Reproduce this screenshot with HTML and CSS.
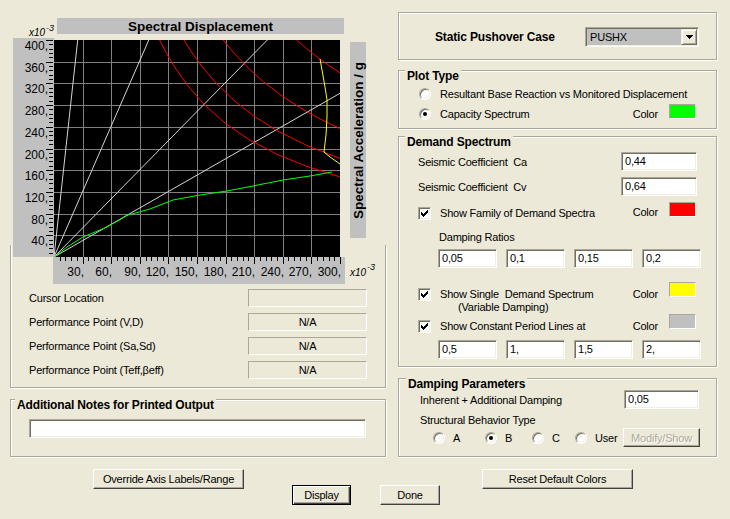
FILE: index.html
```html
<!DOCTYPE html>
<html>
<head>
<meta charset="utf-8">
<title>Pushover Curve</title>
<link rel="stylesheet" href="styles.css">
</head>
<body>
<div class="dialog">
  <div class="panels">
    <div class="left">
      <svg class="chart" width="392" height="286" viewBox="0 0 392 286">
        <defs><clipPath id="plotclip"><rect x="54" y="40" width="286" height="217"/></clipPath></defs>
        <text class="exp" x="29" y="36">x10</text><text class="exp-sup" x="46" y="31">-3</text>
        <rect class="panel" x="57" y="18" width="287" height="16"/>
        <text class="ttl" x="200.5" y="31" text-anchor="middle">Spectral Displacement</text>
        <rect class="panel" x="13" y="38" width="41" height="219"/>
        <rect class="panel" x="53" y="257" width="292" height="27"/>
        <rect class="panel" x="350" y="42" width="16" height="196"/>
        <text class="ttl" transform="translate(362.5 140.5) rotate(-90)" text-anchor="middle">Spectral Acceleration / g</text>
        <rect x="54" y="40" width="286" height="217" fill="#000"/>
        <path class="grid" d="M54 62.5H340M54 83.5H340M54 105.5H340M54 127.5H340M54 149.5H340M54 170.5H340M54 192.5H340M54 214.5H340M54 235.5H340M83.5 40V257M111.5 40V257M140.5 40V257M168.5 40V257M197.5 40V257M226.5 40V257M254.5 40V257M283.5 40V257M311.5 40V257"/>
        <g clip-path="url(#plotclip)" fill="none">
          <path stroke="#d4d4d4" d="M54 257L77.7 40M54 257L148.8 40M54 257L267.3 40M54 257L340 93.3"/>
          <polyline stroke="#ff0000" points="296.6,40 306.6,48.6 316.2,56.2 327.6,64.6 340,72.9"/>
          <polyline stroke="#ff0000" points="223.2,40 235.1,54.3 249.4,69.1 263.7,81.9 282.8,96.5 301.9,108.8 320.9,119.4 340,128.6"/>
          <polyline stroke="#ff0000" points="183.9,40 192.2,53.1 201.8,66.2 216.1,83.1 235.1,101.4 254.2,116.2 278,131.2 306.6,145.4 340,158.4"/>
          <polyline stroke="#ff0000" points="159.6,40 166.5,53.3 175.1,67.8 187.5,85.3 204.6,104.9 225.6,123.5 249.4,139.8 278,154.7 306.6,166.3 340,176.9"/>
          <polyline stroke="#ffff00" points="320,59 322,70 325,87 327,100 327,117 326,135 324,152 330,157 340,164"/>
          <polyline stroke="#00ff00" points="54,257 67,247 83,237 107,227 128,215 150,209 173,200 200,195 227,191 253,186 283,180 310,176 332,172"/>
        </g>
        <path class="tick" d="M46 40.5h7M46 62.5h7M46 83.5h7M46 105.5h7M46 127.5h7M46 149.5h7M46 170.5h7M46 192.5h7M46 214.5h7M46 235.5h7M49 44.5h4M49 49.5h4M49 53.5h4M49 57.5h4M49 66.5h4M49 70.5h4M49 75.5h4M49 79.5h4M49 88.5h4M49 92.5h4M49 96.5h4M49 101.5h4M49 109.5h4M49 114.5h4M49 118.5h4M49 122.5h4M49 131.5h4M49 135.5h4M49 140.5h4M49 144.5h4M49 153.5h4M49 157.5h4M49 161.5h4M49 166.5h4M49 174.5h4M49 179.5h4M49 183.5h4M49 188.5h4M49 196.5h4M49 201.5h4M49 205.5h4M49 209.5h4M49 218.5h4M49 222.5h4M49 227.5h4M49 231.5h4M49 240.5h4M49 244.5h4M49 248.5h4M49 253.5h4"/>
        <path class="tick" d="M83.5 257v7M111.5 257v7M140.5 257v7M168.5 257v7M197.5 257v7M226.5 257v7M254.5 257v7M283.5 257v7M311.5 257v7M340.5 257v7M60.5 257v4M65.5 257v4M71.5 257v4M77.5 257v4M88.5 257v4M94.5 257v4M100.5 257v4M105.5 257v4M117.5 257v4M123.5 257v4M128.5 257v4M134.5 257v4M146.5 257v4M151.5 257v4M157.5 257v4M163.5 257v4M174.5 257v4M180.5 257v4M186.5 257v4M191.5 257v4M203.5 257v4M208.5 257v4M214.5 257v4M220.5 257v4M231.5 257v4M237.5 257v4M243.5 257v4M248.5 257v4M260.5 257v4M266.5 257v4M271.5 257v4M277.5 257v4M288.5 257v4M294.5 257v4M300.5 257v4M306.5 257v4M317.5 257v4M323.5 257v4M329.5 257v4M334.5 257v4"/>
        <g class="ax" text-anchor="end">
          <text x="48" y="50">400,</text><text x="48" y="72">360,</text><text x="48" y="93">320,</text><text x="48" y="115">280,</text><text x="48" y="137">240,</text><text x="48" y="159">200,</text><text x="48" y="180">160,</text><text x="48" y="202">120,</text><text x="48" y="224">80,</text><text x="48" y="245">40,</text>
          <text x="84" y="276">30,</text><text x="112" y="276">60,</text><text x="141" y="276">90,</text><text x="169" y="276">120,</text><text x="198" y="276">150,</text><text x="227" y="276">180,</text><text x="255" y="276">210,</text><text x="284" y="276">240,</text><text x="312" y="276">270,</text><text x="341" y="276">300,</text>
        </g>
        <text class="exp" x="350" y="276">x10</text><text class="exp-sup" x="367" y="270">-3</text>
      </svg>

      <div class="group results">
        <div class="info-row"><span>Cursor Location</span><span class="static"></span></div>
        <div class="info-row"><span>Performance Point (V,D)</span><span class="static">N/A</span></div>
        <div class="info-row"><span>Performance Point (Sa,Sd)</span><span class="static">N/A</span></div>
        <div class="info-row"><span>Performance Point (Teff,βeff)</span><span class="static">N/A</span></div>
      </div>

      <div class="group notes">
        <div class="legend">Additional Notes for Printed Output</div>
        <div class="edit notes-edit"></div>
      </div>
    </div>

    <div class="right">
      <div class="group case">
        <span class="bold">Static Pushover Case</span>
        <div class="combo">
          <span class="combo-text">PUSHX</span>
          <span class="combo-btn"><svg width="7" height="4" viewBox="0 0 7 4"><path d="M0 0H7V1H6V2H5V3H4V4H3V3H2V2H1V1H0Z" fill="#000"/></svg></span>
        </div>
      </div>

      <div class="group plot-type">
        <div class="legend">Plot Type</div>
        <div class="opt-row first"><span class="radio"></span><span class="opt-label">Resultant Base Reaction vs Monitored Displacement</span></div>
        <div class="opt-row"><span class="radio checked"></span><span class="opt-label">Capacity Spectrum</span><span class="color-label">Color</span><span class="swatch green"></span></div>
      </div>

      <div class="group demand">
        <div class="legend">Demand Spectrum</div>
        <div class="field-row ca"><span>Seismic Coefficient&nbsp; Ca</span><span class="edit coef">0,44</span></div>
        <div class="field-row cv"><span>Seismic Coefficient&nbsp; Cv</span><span class="edit coef">0,64</span></div>
        <div class="check-row family">
          <span class="checkbox"><svg width="7" height="7" viewBox="0 0 7 7"><path d="M6 0H7V3H6V4H5V5H4V6H3V7H2V6H1V5H0V2H1V3H2V4H3V3H4V2H5V1H6Z" fill="#000"/></svg></span>
          <span class="opt-label">Show Family of Demand Spectra</span>
          <span class="color-label">Color</span><span class="swatch red"></span>
        </div>
        <div class="sub-label">Damping Ratios</div>
        <div class="quad first-quad"><span class="edit">0,05</span><span class="edit">0,1</span><span class="edit">0,15</span><span class="edit">0,2</span></div>
        <div class="check-row single">
          <span class="checkbox"><svg width="7" height="7" viewBox="0 0 7 7"><path d="M6 0H7V3H6V4H5V5H4V6H3V7H2V6H1V5H0V2H1V3H2V4H3V3H4V2H5V1H6Z" fill="#000"/></svg></span>
          <span class="opt-label two-line"><span class="l1">Show Single&nbsp; Demand Spectrum</span><span class="l2">(Variable Damping)</span></span>
          <span class="color-label">Color</span><span class="swatch yellow"></span>
        </div>
        <div class="check-row constant">
          <span class="checkbox"><svg width="7" height="7" viewBox="0 0 7 7"><path d="M6 0H7V3H6V4H5V5H4V6H3V7H2V6H1V5H0V2H1V3H2V4H3V3H4V2H5V1H6Z" fill="#000"/></svg></span>
          <span class="opt-label">Show Constant Period Lines at</span>
          <span class="color-label">Color</span><span class="swatch grey"></span>
        </div>
        <div class="quad second-quad"><span class="edit">0,5</span><span class="edit">1,</span><span class="edit">1,5</span><span class="edit">2,</span></div>
      </div>

      <div class="group damping">
        <div class="legend">Damping Parameters</div>
        <div class="field-row inherent"><span>Inherent + Additional Damping</span><span class="edit coef2">0,05</span></div>
        <div class="sub-label struct">Structural Behavior Type</div>
        <div class="behavior">
          <span class="beh a"><span class="radio"></span><span class="opt-label">A</span></span>
          <span class="beh b"><span class="radio checked"></span><span class="opt-label">B</span></span>
          <span class="beh c"><span class="radio"></span><span class="opt-label">C</span></span>
          <span class="beh u"><span class="radio"></span><span class="opt-label">User</span></span>
          <span class="button disabled modify">Modify/Show</span>
        </div>
      </div>
    </div>
  </div>

  <div class="footer">
    <div class="btn-row top-row">
      <span class="button wide">Override Axis Labels/Range</span>
      <span class="button wide reset">Reset Default Colors</span>
    </div>
    <div class="btn-row bottom-row">
      <span class="button default display">Display</span>
      <span class="button done">Done</span>
    </div>
  </div>
</div>
</body>
</html>
```

FILE: styles.css
```css
* { box-sizing: border-box; }
html, body { margin: 0; padding: 0; }
body {
  width: 730px;
  height: 519px;
  overflow: hidden;
  background: #ECE9D8;
  font-family: "Liberation Sans", Arial, sans-serif;
  font-size: 11px;
  letter-spacing: -0.2px;
  color: #000;
}
.dialog { display: flex; flex-direction: column; width: 730px; height: 519px; }
.panels { display: flex; }
.left { width: 392px; display: flex; flex-direction: column; }
.right { width: 338px; display: flex; flex-direction: column; padding: 12px 0 0 6px; }

/* chart */
.chart { display: block; position: relative; z-index: 1; margin-bottom: -41px; letter-spacing: 0; }
.chart .panel { fill: #C0C0C0; }
.chart .ttl { font: bold 13.5px "Liberation Sans", Arial, sans-serif; fill: #000; }
.chart .ax { font: 12px "Liberation Sans", Arial, sans-serif; fill: #000; }
.chart .exp { font: italic 10px "Liberation Sans", Arial, sans-serif; fill: #000; }
.chart .exp-sup { font: italic 9px "Liberation Sans", Arial, sans-serif; fill: #000; }
.chart .grid { stroke: #808080; stroke-width: 1; fill: none; }
.chart .tick { stroke: #000; stroke-width: 1; fill: none; }

/* group boxes */
.group {
  border: 1px solid #ACA899;
  box-shadow: inset 1px 1px 0 #fff, 1px 1px 0 #fff;
  display: flex;
  flex-direction: column;
}
.legend {
  align-self: flex-start;
  margin: -1px 0 0 6px;
  padding: 0 2px;
  height: 12px;
  line-height: 12px;
  font-weight: bold;
  font-size: 12px;
  letter-spacing: -0.15px;
  background: #ECE9D8;
  position: relative;
  white-space: nowrap;
}
.bold { font-weight: bold; font-size: 12px; letter-spacing: -0.15px; }

.results {
  margin-left: 10px;
  width: 376px;
  height: 143px;
  border-top: 0;
  box-shadow: inset 1px 0 0 #fff, 1px 1px 0 #fff;
  padding: 44px 18px 0 18px;
  gap: 6px;
}
.info-row { display: flex; align-items: center; justify-content: space-between; height: 18px; }
.static {
  width: 119px;
  height: 18px;
  border: 1px solid;
  border-color: #ACA899 #fff #fff #ACA899;
  text-align: center;
  line-height: 16px;
}
.notes { margin: 11px 0 0 10px; width: 376px; height: 58px; }
.notes .legend { margin-left: 4px; }
.notes-edit { margin: 8px 0 0 18px; width: 337px; height: 18px; }

.edit {
  display: block;
  background: #fff;
  border: 1px solid;
  border-color: #ACA899 #fff #fff #ACA899;
  box-shadow: inset 1px 1px 0 #716F64, inset -1px -1px 0 #F1EFE2;
  padding-left: 3px;
  line-height: 17px;
  height: 19px;
  white-space: nowrap;
}

/* static pushover case */
.case {
  width: 319px;
  height: 48px;
  flex-direction: row;
  align-items: center;
  justify-content: space-between;
  padding: 1px 17px 0 36px;
}
.combo {
  width: 114px;
  height: 20px;
  display: flex;
  border: 1px solid;
  border-color: #ACA899 #fff #fff #ACA899;
  box-shadow: inset 1px 1px 0 #716F64, inset -1px -1px 0 #F1EFE2;
  background: #C0C0C0;
  padding: 1px;
}
.combo-text { flex: 1; padding-left: 3px; line-height: 16px; }
.combo-btn {
  width: 16px;
  height: 16px;
  background: #ECE9D8;
  border: 1px solid;
  border-color: #F1EFE2 #716F64 #716F64 #F1EFE2;
  box-shadow: inset 1px 1px 0 #fff, inset -1px -1px 0 #ACA899;
  display: flex;
  align-items: center;
  justify-content: center;
}
.combo-btn svg { display: block; }

/* plot type */
.plot-type { width: 319px; height: 59px; margin-top: 10px; }
.opt-row { display: flex; align-items: center; height: 20px; padding: 0 20px 0 20px; }
.opt-row.first { margin-top: 2px; }
.opt-row .swatch { align-self: flex-start; }
.radio {
  flex: none;
  width: 12px;
  height: 12px;
  border-radius: 50%;
  background: #fff;
  border: 1px solid;
  border-color: #ACA899 #fff #fff #ACA899;
  box-shadow: inset 1px 1px 0 #716F64, inset -1px -1px 0 #F1EFE2;
  display: flex;
  align-items: center;
  justify-content: center;
}
.radio.checked::after {
  content: "";
  width: 4px;
  height: 4px;
  border-radius: 50%;
  background: #000;
}
.opt-label { margin-left: 9px; white-space: nowrap; }
.color-label { margin-left: auto; }
.swatch {
  flex: none;
  width: 27px;
  height: 15px;
  margin-left: 11px;
  border: 1px solid;
  border-color: #ACA899 #fff #fff #ACA899;
}
.green { background: #00FF00; }
.red { background: #FF0000; }
.yellow { background: #FFFF00; }
.grey { background: #C0C0C0; }

/* demand spectrum */
.demand { width: 319px; height: 231px; margin-top: 7px; }
.field-row { display: flex; align-items: center; justify-content: space-between; height: 19px; padding: 0 19px 0 19px; }
.field-row.ca { margin-top: 4px; }
.field-row.cv { margin-top: 6px; }
.coef { width: 76px; }
.check-row { display: flex; padding: 0 20px 0 19px; }
.checkbox {
  flex: none;
  width: 13px;
  height: 13px;
  background: #fff;
  border: 1px solid;
  border-color: #ACA899 #fff #fff #ACA899;
  box-shadow: inset 1px 1px 0 #716F64, inset -1px -1px 0 #F1EFE2;
  display: flex;
  align-items: center;
  justify-content: center;
}
.checkbox svg { display: block; }
.check-row.family { margin-top: 6px; height: 22px; align-items: center; }
.check-row.family .swatch { align-self: flex-start; }
.check-row.family .color-label { margin-top: -2px; }
.sub-label { padding-left: 40px; height: 14px; line-height: 14px; margin-top: 6px; }
.quad { display: flex; gap: 9px; padding-left: 39px; margin-top: 5px; }
.quad .edit { width: 59px; }
.check-row.single { margin-top: 20px; height: 26px; align-items: flex-start; }
.two-line { display: flex; flex-direction: column; line-height: 13px; }
.two-line .l2 { padding-left: 18px; }
.check-row.single .color-label { line-height: 13px; }
.check-row.single .swatch, .check-row.constant .swatch { margin-top: -6px; }
.check-row.constant { margin-top: 6px; height: 13px; align-items: flex-start; line-height: 13px; }
.quad.second-quad { margin-top: 7px; }

/* damping parameters */
.damping { width: 319px; height: 79px; margin-top: 11px; }
.damping .legend { margin-left: 7px; }
.field-row.inherent { padding: 0 17px 0 21px; margin-top: 0; }
.coef2 { width: 75px; }
.sub-label.struct { padding-left: 21px; margin-top: 4px; }
.behavior { display: flex; align-items: center; height: 19px; margin-top: 1px; padding: 0 16px 0 34px; }
.beh { display: flex; align-items: center; }
.beh .opt-label { margin-left: 8px; }
.beh.a { width: 52px; }
.beh.b { width: 47px; }
.beh.c { width: 43px; }

/* buttons */
.button {
  display: flex;
  align-items: center;
  justify-content: center;
  height: 20px;
  background: #ECE9D8;
  border: 1px solid;
  border-color: #fff #404040 #404040 #fff;
  box-shadow: inset -1px -1px 0 #ACA899;
  white-space: nowrap;
}
.button.disabled { color: #ACA899; text-shadow: 1px 1px 0 #fff; }
.modify { width: 77px; height: 19px; margin-left: auto; }
.footer { display: flex; flex-direction: column; }
.btn-row { display: flex; }
.top-row { margin-top: 12px; padding-left: 93px; }
.wide { width: 151px; }
.reset { margin-left: 238px; }
.bottom-row { margin-top: -4px; padding-left: 292px; }
.display {
  width: 59px;
  border: 1px solid #000;
  box-shadow: inset 1px 1px 0 #fff, inset -1px -1px 0 #404040, inset -2px -2px 0 #ACA899;
}
.done { width: 60px; margin-left: 29px; }
```
